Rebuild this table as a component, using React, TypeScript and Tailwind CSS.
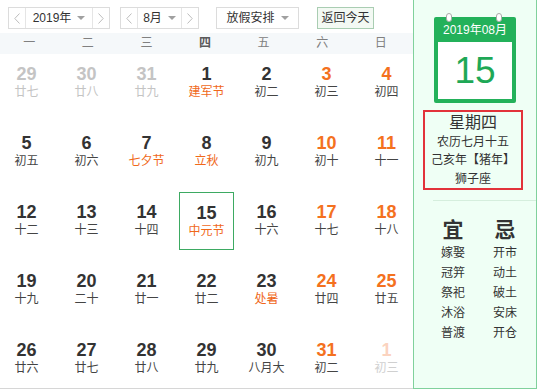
import React from "react";

type Day = { n: number; l: string; kind?: "prev" | "next"; wk?: boolean; fest?: boolean; today?: boolean };

const rows: Day[][] = [
  [
    { n: 29, l: "廿七", kind: "prev" },
    { n: 30, l: "廿八", kind: "prev" },
    { n: 31, l: "廿九", kind: "prev" },
    { n: 1, l: "建军节", fest: true },
    { n: 2, l: "初二" },
    { n: 3, l: "初三", wk: true },
    { n: 4, l: "初四", wk: true },
  ],
  [
    { n: 5, l: "初五" },
    { n: 6, l: "初六" },
    { n: 7, l: "七夕节", fest: true },
    { n: 8, l: "立秋", fest: true },
    { n: 9, l: "初九" },
    { n: 10, l: "初十", wk: true },
    { n: 11, l: "十一", wk: true },
  ],
  [
    { n: 12, l: "十二" },
    { n: 13, l: "十三" },
    { n: 14, l: "十四" },
    { n: 15, l: "中元节", fest: true, today: true },
    { n: 16, l: "十六" },
    { n: 17, l: "十七", wk: true },
    { n: 18, l: "十八", wk: true },
  ],
  [
    { n: 19, l: "十九" },
    { n: 20, l: "二十" },
    { n: 21, l: "廿一" },
    { n: 22, l: "廿二" },
    { n: 23, l: "处暑", fest: true },
    { n: 24, l: "廿四", wk: true },
    { n: 25, l: "廿五", wk: true },
  ],
  [
    { n: 26, l: "廿六" },
    { n: 27, l: "廿七" },
    { n: 28, l: "廿八" },
    { n: 29, l: "廿九" },
    { n: 30, l: "八月大" },
    { n: 31, l: "初二", wk: true },
    { n: 1, l: "初三", wk: true, kind: "next" },
  ],
];

const weekdays = ["一", "二", "三", "四", "五", "六", "日"];

function Caret() {
  return <span className="ml-[6px] inline-block w-0 h-0 border-x-[4px] border-x-transparent border-t-[4px] border-t-[#a0a0a0]" />;
}

function Chevron({ dir }: { dir: "l" | "r" }) {
  return (
    <svg width="6" height="11" viewBox="0 0 6 11" fill="none">
      <polyline
        points={dir === "l" ? "5.5,0.5 0.8,5.5 5.5,10.5" : "0.5,0.5 5.2,5.5 0.5,10.5"}
        stroke="#bdbdbd"
        strokeWidth="1"
      />
    </svg>
  );
}

function Stepper({ label, mid }: { label: string; mid: string }) {
  return (
    <div className="flex h-[22px] border border-[#dcdcdc] bg-white text-[12px] text-[#333]">
      <span className="w-[17px] flex items-center justify-center border-r border-[#e5e5e5]">
        <Chevron dir="l" />
      </span>
      <span className={`${mid} flex items-center justify-center`}>
        {label}
        <Caret />
      </span>
      <span className="w-[17px] flex items-center justify-center border-l border-[#e5e5e5]">
        <Chevron dir="r" />
      </span>
    </div>
  );
}

function Cell({ d }: { d: Day }) {
  let num = "text-[#333]";
  let lunar = "text-[#444]";
  if (d.kind === "prev") {
    num = "text-[#c4c4c4]";
    lunar = "text-[#c4c4c4]";
  } else if (d.kind === "next") {
    num = "text-[#fbd3bf]";
    lunar = "text-[#d0d0d0]";
  } else if (d.wk) {
    num = "text-[#f4711e]";
  }
  if (d.fest) lunar = "text-[#f0681a]";

  return (
    <div
      className={`h-[58px] flex flex-col items-center pt-[10px] ${
        d.today ? "border border-[#3daa62]" : ""
      }`}
    >
      <span className={`text-[18px] font-bold leading-[20px] ${num}`}>{d.n}</span>
      <span className={`text-[12px] leading-[16px] ${lunar}`}>{d.l}</span>
    </div>
  );
}

export default function App() {
  return (
    <div
      className="flex w-[537px] h-[389px] overflow-hidden bg-white"
      style={{ fontFamily: '"Liberation Sans", "Noto Sans CJK SC", sans-serif' }}
    >
      {/* Calendar grid */}
      <div className="w-[413px] h-[389px] flex flex-col border-b border-[#d6d6d6] shrink-0">
        <div className="h-[37px] flex items-start pt-[7px] pl-[8px]">
          <Stepper label="2019年" mid="w-[66px]" />
          <div className="ml-[10px]">
            <Stepper label="8月" mid="w-[43px]" />
          </div>
          <div className="ml-[17px] h-[22px] w-[83px] border border-[#dcdcdc] flex items-center justify-center text-[12px] text-[#333]">
            放假安排
            <Caret />
          </div>
          <div className="ml-[18px] h-[22px] w-[57px] border border-[#a9cdb2] bg-[#f3f9f3] flex items-center justify-center text-[12px] text-[#333]">
            返回今天
          </div>
        </div>

        <div className="h-[25px] bg-[#f5f8fa] grid grid-cols-7 w-[413px] pr-[3px] items-center text-[12px] text-[#808080]">
          {weekdays.map((w) => (
            <span key={w} className={`text-center ${w === "四" ? "font-bold text-[#5a5a5a]" : ""}`}>
              {w}
            </span>
          ))}
        </div>

        <div className="grid grid-cols-[repeat(7,55px)] gap-x-[5px] gap-y-[11px] -ml-[1px]">
          {rows.flat().map((d, i) => (
            <Cell key={i} d={d} />
          ))}
        </div>
      </div>

      {/* Side panel */}
      <div className="w-[124px] h-[389px] shrink-0 border-x border-b border-[#80d19c] bg-[#effff5] flex flex-col">
        <div className="relative mx-auto mt-[17px] w-[82px] bg-[#23b15a] rounded-[2px] px-[4px] pb-[4px]">
          <span className="absolute left-[12px] -top-[4px] w-[6px] h-[9px] rounded-full bg-white border border-[#aaa]" />
          <span className="absolute left-[62px] -top-[4px] w-[6px] h-[9px] rounded-full bg-white border border-[#aaa]" />
          <div className="h-[25px] flex items-center justify-center text-[12px] text-white">2019年08月</div>
          <div className="h-[57px] bg-white flex items-center justify-center text-[37px] text-[#1ea856] leading-none">
            15
          </div>
        </div>

        <div className="ml-[9px] mt-[7px] w-[100px] h-[80px] border-2 border-[#e2333a] flex flex-col items-center pt-[1px] text-[#333]">
          <span className="text-[16px] leading-[20px]">星期四</span>
          <span className="text-[12px] leading-[18px]">农历七月十五</span>
          <span className="text-[12px] leading-[19px]">己亥年【猪年】</span>
          <span className="text-[12px] leading-[18px]">狮子座</span>
        </div>

        <div className="mt-[10px] border-t border-[#d5eedd] pt-[17px] flex ml-[19px] gap-x-[12px]">
          <div className="w-[40px] flex flex-col items-center text-[#333]">
            <span className="text-[21px] font-bold leading-[24px] mb-[1px]">宜</span>
            {["嫁娶", "冠笄", "祭祀", "沐浴", "普渡"].map((t) => (
              <span key={t} className="text-[12px] leading-[20px]">{t}</span>
            ))}
          </div>
          <div className="w-[40px] flex flex-col items-center text-[#333]">
            <span className="text-[21px] font-bold leading-[24px] mb-[1px]">忌</span>
            {["开市", "动土", "破土", "安床", "开仓"].map((t) => (
              <span key={t} className="text-[12px] leading-[20px]">{t}</span>
            ))}
          </div>
        </div>
      </div>
    </div>
  );
}
